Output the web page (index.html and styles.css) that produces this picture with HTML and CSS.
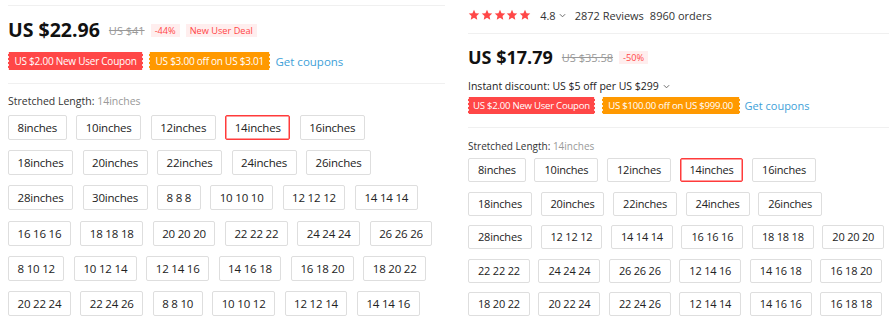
FILE: index.html
```html
<!DOCTYPE html>
<html lang="en">
<head>
    <meta charset="UTF-8">
    <title>Product options</title>
    <link rel="stylesheet" href="styles.css">
</head>
<body>
<div class="page">

    <!-- left snapshot -->
    <div class="panel panel-left">
        <div class="price-block">
            <div class="price-row">
                <span class="price">US $22.96</span>
                <span class="price-old">US $41</span>
                <span class="tag">-44%</span>
                <span class="tag">New User Deal</span>
            </div>
            <div class="coupons">
                <span class="coupon coupon-red">US $2.00 New User Coupon</span>
                <span class="coupon coupon-orange">US $3.00 off on US $3.01</span>
                <a class="get-coupons">Get coupons</a>
            </div>
        </div>
        <div class="sku">
            <div class="sku-title">Stretched Length: <span class="sku-value">14inches</span></div>
            <div class="sku-list">
                <div class="sku-row">
                    <div class="sku-item">8inches</div>
                    <div class="sku-item">10inches</div>
                    <div class="sku-item">12inches</div>
                    <div class="sku-item selected">14inches</div>
                    <div class="sku-item">16inches</div>
                </div>
                <div class="sku-row">
                    <div class="sku-item">18inches</div>
                    <div class="sku-item">20inches</div>
                    <div class="sku-item">22inches</div>
                    <div class="sku-item">24inches</div>
                    <div class="sku-item">26inches</div>
                </div>
                <div class="sku-row">
                    <div class="sku-item">28inches</div>
                    <div class="sku-item">30inches</div>
                    <div class="sku-item">8 8 8</div>
                    <div class="sku-item">10 10 10</div>
                    <div class="sku-item">12 12 12</div>
                    <div class="sku-item">14 14 14</div>
                </div>
                <div class="sku-row">
                    <div class="sku-item">16 16 16</div>
                    <div class="sku-item">18 18 18</div>
                    <div class="sku-item">20 20 20</div>
                    <div class="sku-item">22 22 22</div>
                    <div class="sku-item">24 24 24</div>
                    <div class="sku-item">26 26 26</div>
                </div>
                <div class="sku-row">
                    <div class="sku-item">8 10 12</div>
                    <div class="sku-item">10 12 14</div>
                    <div class="sku-item">12 14 16</div>
                    <div class="sku-item">14 16 18</div>
                    <div class="sku-item">16 18 20</div>
                    <div class="sku-item">18 20 22</div>
                </div>
                <div class="sku-row">
                    <div class="sku-item">20 22 24</div>
                    <div class="sku-item">22 24 26</div>
                    <div class="sku-item">8 8 10</div>
                    <div class="sku-item">10 10 12</div>
                    <div class="sku-item">12 12 14</div>
                    <div class="sku-item">14 14 16</div>
                </div>
            </div>
        </div>
    </div>

    <!-- right snapshot -->
    <div class="panel panel-right">
        <div class="rating">
            <span class="stars">
                <svg viewBox="0 0 24 24"><polygon points="12,1.5 15.1,8.3 22.5,9.1 17,14.1 18.5,21.4 12,17.7 5.5,21.4 7,14.1 1.5,9.1 8.9,8.3"/></svg>
                <svg viewBox="0 0 24 24"><polygon points="12,1.5 15.1,8.3 22.5,9.1 17,14.1 18.5,21.4 12,17.7 5.5,21.4 7,14.1 1.5,9.1 8.9,8.3"/></svg>
                <svg viewBox="0 0 24 24"><polygon points="12,1.5 15.1,8.3 22.5,9.1 17,14.1 18.5,21.4 12,17.7 5.5,21.4 7,14.1 1.5,9.1 8.9,8.3"/></svg>
                <svg viewBox="0 0 24 24"><polygon points="12,1.5 15.1,8.3 22.5,9.1 17,14.1 18.5,21.4 12,17.7 5.5,21.4 7,14.1 1.5,9.1 8.9,8.3"/></svg>
                <svg viewBox="0 0 24 24"><polygon points="12,1.5 15.1,8.3 22.5,9.1 17,14.1 18.5,21.4 12,17.7 5.5,21.4 7,14.1 1.5,9.1 8.9,8.3"/></svg>
            </span>
            <span class="score">4.8<svg class="caret" viewBox="0 0 8 5"><polyline points="1,1 4,4 7,1"/></svg></span>
            <span class="reviews">2872 Reviews</span>
            <span class="orders">8960 orders</span>
        </div>
        <div class="price-block">
            <div class="price-row">
                <span class="price">US $17.79</span>
                <span class="price-old">US $35.58</span>
                <span class="tag">-50%</span>
            </div>
            <div class="discount">Instant discount: US $5 off per US $299<svg class="caret" viewBox="0 0 8 5"><polyline points="1,1 4,4 7,1"/></svg></div>
            <div class="coupons">
                <span class="coupon coupon-red">US $2.00 New User Coupon</span>
                <span class="coupon coupon-orange">US $100.00 off on US $999.00</span>
                <a class="get-coupons">Get coupons</a>
            </div>
        </div>
        <div class="sku">
            <div class="sku-title">Stretched Length: <span class="sku-value">14inches</span></div>
            <div class="sku-list">
                <div class="sku-row">
                    <div class="sku-item">8inches</div>
                    <div class="sku-item">10inches</div>
                    <div class="sku-item">12inches</div>
                    <div class="sku-item selected">14inches</div>
                    <div class="sku-item">16inches</div>
                </div>
                <div class="sku-row">
                    <div class="sku-item">18inches</div>
                    <div class="sku-item">20inches</div>
                    <div class="sku-item">22inches</div>
                    <div class="sku-item">24inches</div>
                    <div class="sku-item">26inches</div>
                </div>
                <div class="sku-row">
                    <div class="sku-item">28inches</div>
                    <div class="sku-item">12 12 12</div>
                    <div class="sku-item">14 14 14</div>
                    <div class="sku-item">16 16 16</div>
                    <div class="sku-item">18 18 18</div>
                    <div class="sku-item">20 20 20</div>
                </div>
                <div class="sku-row">
                    <div class="sku-item">22 22 22</div>
                    <div class="sku-item">24 24 24</div>
                    <div class="sku-item">26 26 26</div>
                    <div class="sku-item">12 14 16</div>
                    <div class="sku-item">14 16 18</div>
                    <div class="sku-item">16 18 20</div>
                </div>
                <div class="sku-row">
                    <div class="sku-item">18 20 22</div>
                    <div class="sku-item">20 22 24</div>
                    <div class="sku-item">22 24 26</div>
                    <div class="sku-item">12 14 14</div>
                    <div class="sku-item">14 16 16</div>
                    <div class="sku-item">16 18 18</div>
                </div>
            </div>
        </div>
    </div>

</div>
</body>
</html>
```

FILE: styles.css
```css
body {
    margin: 0;
    font-family: "Open Sans", Arial, sans-serif;
    color: #222;
    background: #fff;
}
.page {
    display: flex;
    gap: 23px;
    padding-left: 8px;
}
.panel-left {
    width: 437px;
    padding-top: 5px;
}
.panel-right {
    flex: 1;
}

/* rating */
.rating {
    height: 30px;
    margin-bottom: 3px;
    display: flex;
    align-items: center;
    font-size: 11px;
    color: #333;
}
.stars {
    display: flex;
    gap: 0.8px;
    margin-right: 9px;
}
.stars svg {
    width: 12px;
    height: 12px;
    fill: #ff4747;
}
.score {
    display: flex;
    align-items: center;
    margin-right: 9px;
}
.caret {
    width: 7px;
    height: 5px;
    margin-left: 3px;
    fill: none;
    stroke: #666;
    stroke-width: 1.1;
}
.reviews {
    margin-right: 6px;
}

/* price */
.price-block {
    border-top: 1px solid #f0f0f0;
    padding-top: 11px;
    padding-bottom: 13px;
}
.price-row {
    display: flex;
    align-items: center;
    height: 26px;
}
.price {
    font-size: 19.5px;
    font-weight: bold;
    line-height: 26px;
    color: #111;
    margin-right: 9px;
}
.price-old {
    font-size: 11px;
    color: #999;
    text-decoration: line-through;
    margin-right: 6px;
}
.tag {
    font-size: 9.2px;
    line-height: 13px;
    padding: 0 4px;
    color: #ff4747;
    background: #ffeeee;
    margin-right: 6px;
}
.discount {
    display: flex;
    align-items: center;
    font-size: 10.5px;
    line-height: 16px;
    margin-top: 8px;
    margin-bottom: 3px;
}
.discount .caret {
    margin-left: 4px;
}

/* coupons */
.coupons {
    display: flex;
    align-items: center;
    height: 18px;
    margin-top: 9px;
}
.coupon {
    position: relative;
    height: 18px;
    line-height: 18px;
    padding: 0 6.5px;
    font-size: 10px;
    letter-spacing: -0.25px;
    color: #fff;
    margin-right: 6px;
}
.coupon::before,
.coupon::after {
    content: "";
    position: absolute;
    top: 0;
    bottom: 0;
    width: 1px;
    background: repeating-linear-gradient(to bottom, rgba(255, 255, 255, 0.85) 0 2px, transparent 2px 4px);
}
.coupon::before {
    left: 0;
}
.coupon::after {
    right: 0;
}
.coupon-red {
    background: #ff4747;
}
.coupon-orange {
    background: #ff9900;
    margin-right: 5px;
}
.get-coupons {
    font-size: 11.5px;
    color: #3e9fd8;
    cursor: pointer;
}

/* sku */
.sku {
    border-top: 1px solid #f0f0f0;
    padding-top: 9px;
}
.sku-title {
    font-size: 10.5px;
    line-height: 16px;
    color: #333;
}
.sku-value {
    color: #999;
}
.sku-list {
    display: flex;
    flex-direction: column;
    gap: 10.2px;
    margin-top: 6px;
}
.sku-row {
    display: flex;
    gap: 9.5px;
}
.sku-item {
    height: 25px;
    box-sizing: border-box;
    line-height: 23px;
    padding: 0 8.5px;
    border: 1px solid #dedede;
    border-radius: 2px;
    font-size: 11.5px;
    letter-spacing: -0.2px;
    color: #222;
    white-space: nowrap;
}
.sku-item.selected {
    border-color: #ff3b3b;
    box-shadow: inset 0 0 0 0.5px #ff3b3b;
}

/* right snapshot is a touch smaller */
.panel-right .price-block {
    padding-top: 10px;
}
.panel-right .price {
    font-size: 18px;
}
.panel-right .discount {
    margin-top: 8px;
}
.panel-right .coupons {
    height: 17px;
    margin-top: 0;
}
.panel-right .coupon {
    height: 17px;
    line-height: 17px;
    font-size: 9.6px;
    padding: 0 5px;
    margin-right: 7px;
}
.panel-right .coupon-orange {
    padding: 0 6.5px;
    margin-right: 5px;
}
.panel-right .get-coupons {
    font-size: 11px;
}
.panel-right .sku {
    padding-top: 10px;
}
.panel-right .sku-title {
    font-size: 10px;
}
.panel-right .sku-list {
    gap: 9.5px;
    margin-top: 4px;
}
.panel-right .sku-row {
    gap: 8.6px;
}
.panel-right .sku-item {
    height: 24px;
    line-height: 22px;
    font-size: 11px;
    padding: 0 9px;
}
```
